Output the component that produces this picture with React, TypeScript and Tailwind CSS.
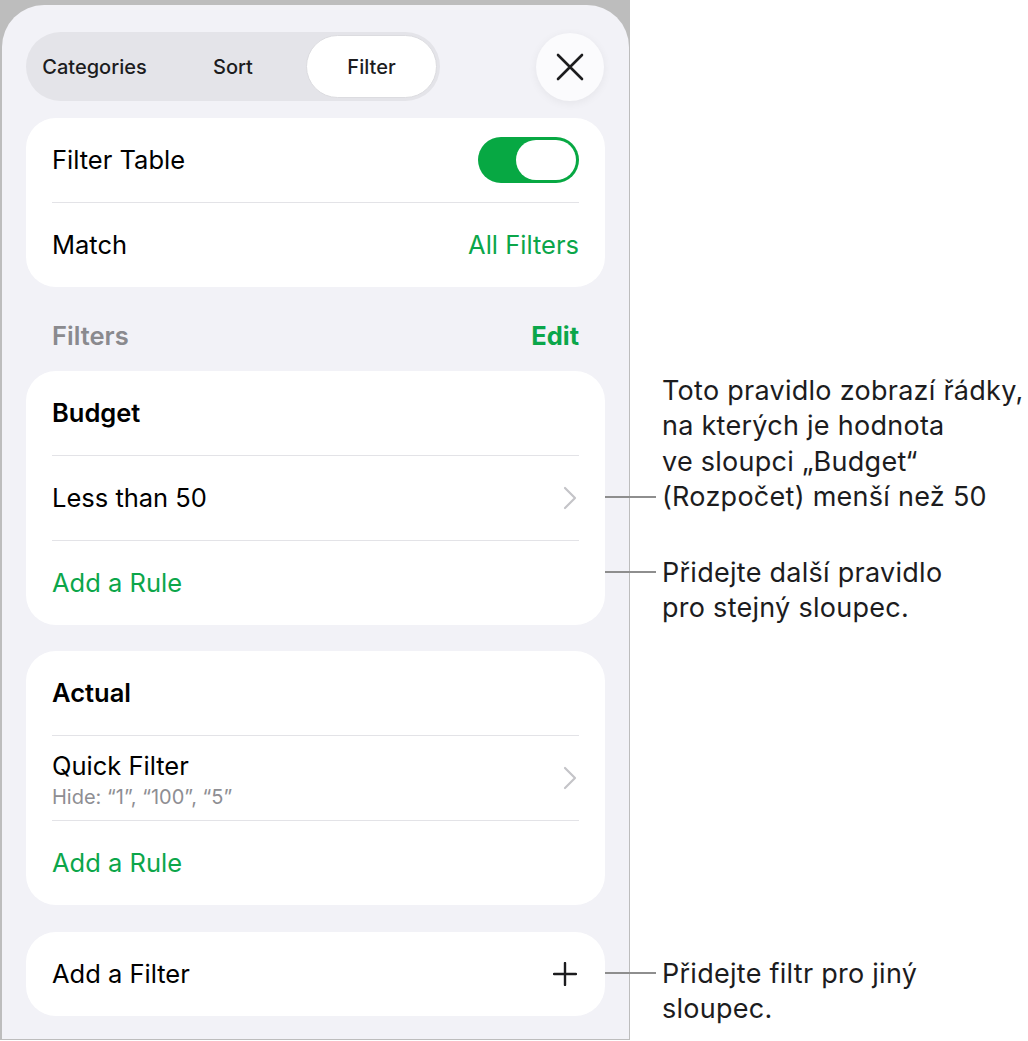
import React from "react";

const GREEN = "text-[#0ba64a]";

function Chevron() {
  return (
    <svg width="14" height="24" viewBox="0 0 14 24" fill="none" className="mr-[2px]">
      <path d="M2 2l10 10L2 22" stroke="#c4c4c8" strokeWidth="2.2" strokeLinecap="round" strokeLinejoin="round" />
    </svg>
  );
}

function Divider() {
  return <div className="mx-[26px] h-px bg-[#e3e3e7]" />;
}

function Row({ children }: { children: React.ReactNode }) {
  return <div className="h-[84px] px-[26px] flex items-center justify-between">{children}</div>;
}

function Callout({ lines, mt, lineTop }: { lines: string[]; mt: string; lineTop: string }) {
  return (
    <div className={`relative ${mt}`}>
      <div className={`absolute left-[-57px] w-[51px] h-[2px] bg-[#8e8e8e] ${lineTop}`} />
      {lines.map((l, i) => (
        <div key={i} className="h-[35.3px] leading-[35px] whitespace-nowrap">
          {l}
        </div>
      ))}
    </div>
  );
}

export default function App() {
  return (
    <div
      className="flex w-[1028px] h-[1041px] bg-white text-black"
      style={{ fontFamily: "Inter, 'Noto Sans', sans-serif" }}
    >
      <div className="w-[630px] h-[1040px] bg-[#bdbdbd] pl-[2px] pt-[5px] pr-[1px] pb-[1px] shrink-0">
        <div className="h-full bg-[#f2f2f7] rounded-t-[42px] pl-[24px] pr-[24px] pt-[27px]">
          {/* top bar */}
          <div className="flex items-center justify-between">
            <div className="flex h-[69px] w-[414px] rounded-full bg-[#e4e4e9] p-[3px] text-[20px] font-medium text-[#1c1c1e]">
              <div className="w-[131px] flex items-center justify-center">Categories</div>
              <div className="w-[146px] flex items-center justify-center">Sort</div>
              <div className="w-[131px] flex items-center justify-center rounded-full bg-white border border-[#dcdce0]">
                Filter
              </div>
            </div>
            <div className="w-[68px] h-[68px] mr-[1px] rounded-full bg-[#fbfbfd] shadow-[0_2px_10px_rgba(0,0,0,0.06)] flex items-center justify-center">
              <svg width="28" height="28" viewBox="0 0 28 28" fill="none">
                <path d="M2 2l24 24M26 2L2 26" stroke="#1c1c1e" strokeWidth="2.6" strokeLinecap="round" />
              </svg>
            </div>
          </div>

          {/* card 1 */}
          <div className="mt-[17px] bg-white rounded-[30px] text-[25.5px]">
            <Row>
              <span>Filter Table</span>
              <div className="w-[101px] h-[46px] rounded-full bg-[#07a843] p-[3px] flex justify-end">
                <div className="w-[60px] h-[40px] rounded-full bg-white" />
              </div>
            </Row>
            <Divider />
            <Row>
              <span>Match</span>
              <span className={GREEN}>All Filters</span>
            </Row>
          </div>

          {/* header */}
          <div className="h-[84px] pt-[14px] px-[26px] flex items-center justify-between text-[25.5px] font-semibold">
            <span className="text-[#8a8a8e]">Filters</span>
            <span className={`${GREEN} font-bold`}>Edit</span>
          </div>

          {/* Budget card */}
          <div className="bg-white rounded-[30px] text-[25.5px]">
            <Row>
              <span className="font-semibold">Budget</span>
            </Row>
            <Divider />
            <Row>
              <span>Less than 50</span>
              <Chevron />
            </Row>
            <Divider />
            <Row>
              <span className={GREEN}>Add a Rule</span>
            </Row>
          </div>

          {/* Actual card */}
          <div className="mt-[26px] bg-white rounded-[30px] text-[25.5px]">
            <Row>
              <span className="font-semibold">Actual</span>
            </Row>
            <Divider />
            <Row>
              <div className="flex flex-col pt-[8px]">
                <span className="leading-[30px]">Quick Filter</span>
                <span className="text-[20px] leading-[32px] text-[#8e8e93]">Hide: “1”, “100”, “5”</span>
              </div>
              <Chevron />
            </Row>
            <Divider />
            <Row>
              <span className={GREEN}>Add a Rule</span>
            </Row>
          </div>

          {/* Add filter */}
          <div className="mt-[27px] bg-white rounded-[30px] text-[25.5px]">
            <Row>
              <span>Add a Filter</span>
              <svg width="24" height="24" viewBox="0 0 24 24" fill="none" className="mr-[2px]">
                <path d="M12 1v22M1 12h22" stroke="#1c1c1e" strokeWidth="2.4" strokeLinecap="round" />
              </svg>
            </Row>
          </div>
        </div>
      </div>

      {/* annotations */}
      <div className="pl-[32px] text-[27px] tracking-[0.01em] text-[#1c1c1e] flex flex-col">
        <Callout
          mt="mt-[373px]"
          lineTop="top-[123px]"
          lines={["Toto pravidlo zobrazí řádky,", "na kterých je hodnota", "ve sloupci „Budget“", "(Rozpočet) menší než 50"]}
        />
        <Callout mt="mt-[41px]" lineTop="top-[16px]" lines={["Přidejte další pravidlo", "pro stejný sloupec."]} />
        <Callout mt="mt-[330px]" lineTop="top-[16px]" lines={["Přidejte filtr pro jiný", "sloupec."]} />
      </div>
    </div>
  );
}
